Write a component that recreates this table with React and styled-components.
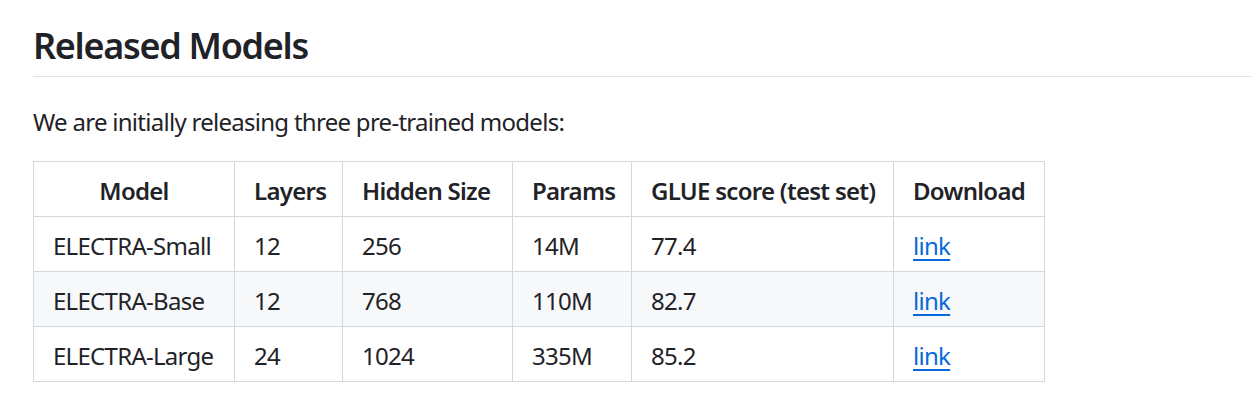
import styled, { createGlobalStyle } from "styled-components";

const GlobalStyle = createGlobalStyle`
  body {
    margin: 0;
    background: #ffffff;
    color: #1f2328;
    font-family: "Noto Sans", "Open Sans", sans-serif;
  }
`;

const Article = styled.div`
  padding: 0 0 0 33px;
  font-size: 24px;
  line-height: 1.5;
  letter-spacing: -0.03em;
`;

const Heading = styled.h2`
  margin: 21px 0 27px;
  padding: 2px 0 8px;
  font-size: 36px;
  font-weight: 600;
  line-height: 1.25;
  letter-spacing: -0.036em;
  border-bottom: 1px solid #dfe3e8;
`;

const Para = styled.p`
  margin: 0 0 21px;
`;

const Table = styled.table`
  border-collapse: collapse;
  border-spacing: 0;
  table-layout: fixed;
  width: 1012px;
`;

const Col = styled.col`
  width: ${(p) => p.$w}px;
`;

const Row = styled.tr`
  background: ${(p) => (p.$alt ? "#f6f8fa" : "#ffffff")};
`;

const HeadCell = styled.th`
  padding: 11px 19px 7px;
  border: 1px solid #d1d9e0;
  font-weight: 600;
  text-align: ${(p) => (p.$center ? "center" : "left")};
  white-space: nowrap;
`;

const Cell = styled.td`
  padding: 11px 19px 7px;
  border: 1px solid #d1d9e0;
  white-space: nowrap;
`;

const Link = styled.a`
  color: #0969da;
  text-decoration: underline;
  text-underline-offset: 4px;
  text-decoration-thickness: 2px;
`;

const widths = [201, 108, 170, 119, 262, 151];

const models = [
  ["ELECTRA-Small", "12", "256", "14M", "77.4"],
  ["ELECTRA-Base", "12", "768", "110M", "82.7"],
  ["ELECTRA-Large", "24", "1024", "335M", "85.2"],
];

const App = () => {
  return (
    <>
      <GlobalStyle />
      <Article>
        <Heading>Released Models</Heading>
        <Para>We are initially releasing three pre-trained models:</Para>
        <Table>
          <colgroup>
            {widths.map((w, i) => (
              <Col key={i} $w={w} />
            ))}
          </colgroup>
          <thead>
            <Row>
              <HeadCell $center>Model</HeadCell>
              <HeadCell>Layers</HeadCell>
              <HeadCell>Hidden Size</HeadCell>
              <HeadCell>Params</HeadCell>
              <HeadCell>GLUE score (test set)</HeadCell>
              <HeadCell>Download</HeadCell>
            </Row>
          </thead>
          <tbody>
            {models.map((m, i) => (
              <Row key={m[0]} $alt={i % 2 === 1}>
                {m.map((v, j) => (
                  <Cell key={j}>{v}</Cell>
                ))}
                <Cell>
                  <Link href="#">link</Link>
                </Cell>
              </Row>
            ))}
          </tbody>
        </Table>
      </Article>
    </>
  );
};

export default App;
